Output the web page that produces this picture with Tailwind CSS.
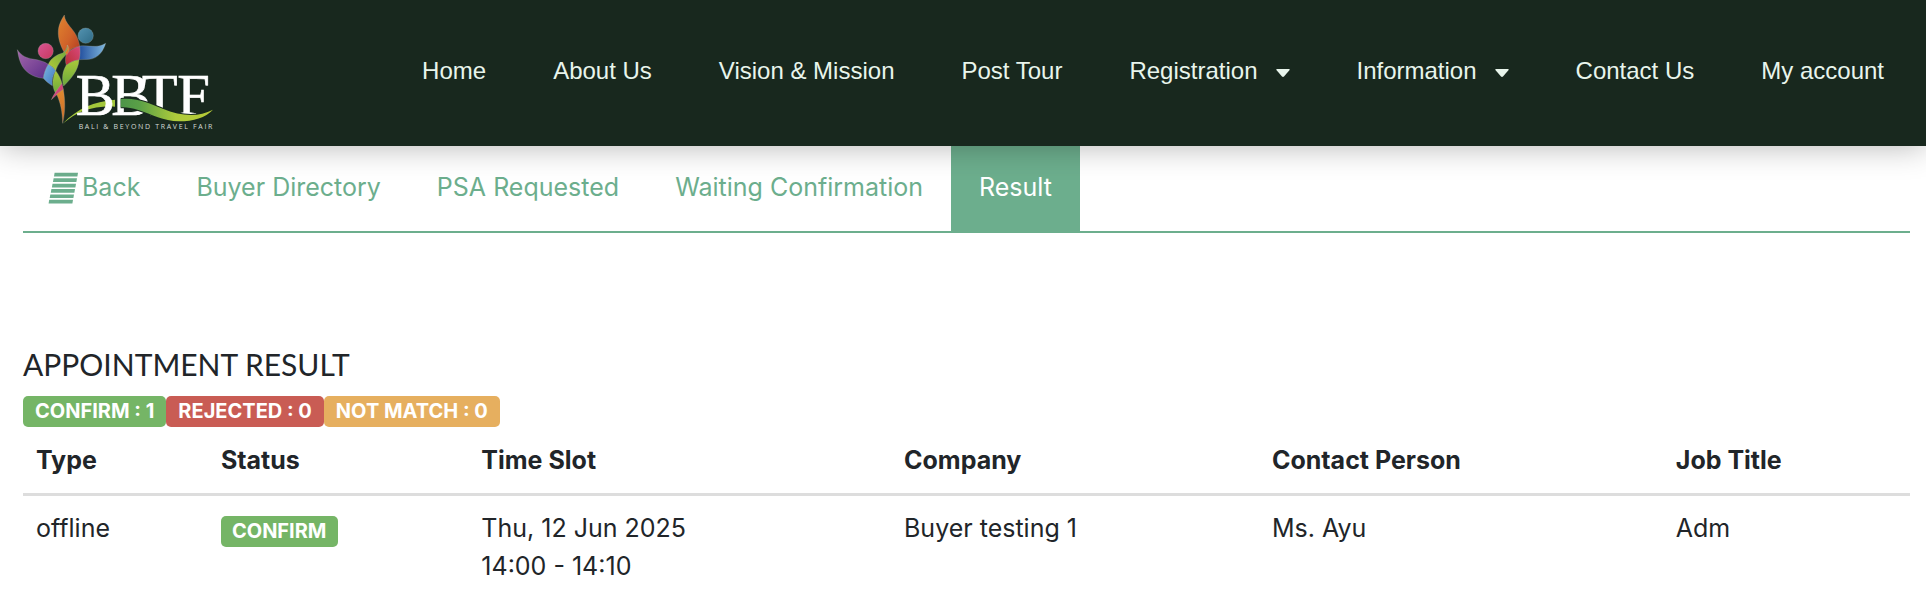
<!DOCTYPE html>
<html lang="en">
<head>
<meta charset="utf-8">
<meta name="viewport" content="width=device-width, initial-scale=1">
<title>BBTF - Appointment Result</title>
<script src="https://cdn.jsdelivr.net/npm/@tailwindcss/browser@4"></script>
</head>
<body class="min-h-screen bg-white font-['Inter',sans-serif] text-[25px] text-[#212529]">
<header class="relative flex items-center justify-between bg-[#18281e] pr-[42px] shadow-[0_0_30px_rgba(0,0,0,0.3)]">
  <a href="#" aria-label="BBTF home" class="shrink-0">
    <svg class="h-[146px] w-60" viewBox="0 0 720 438" role="img" aria-label="BBTF Bali &amp; Beyond Travel Fair">
      <defs>
        <linearGradient id="orange" x1="0" y1="0" x2="1" y2="1"><stop offset="0" stop-color="#e0842e"/><stop offset=".55" stop-color="#d0632a"/><stop offset="1" stop-color="#b03a20"/></linearGradient>
        <linearGradient id="purple" x1="0" y1="0" x2="1" y2="1"><stop offset="0" stop-color="#a468ac"/><stop offset="1" stop-color="#5c2d88"/></linearGradient>
        <linearGradient id="blue" x1="0" y1="0" x2="1" y2="0"><stop offset="0" stop-color="#24509f"/><stop offset="1" stop-color="#7fb8dd"/></linearGradient>
        <linearGradient id="sky" x1="0" y1="0" x2="1" y2="1"><stop offset="0" stop-color="#7bb6e0"/><stop offset="1" stop-color="#3f76bd"/></linearGradient>
        <linearGradient id="lime" x1="0" y1="1" x2="1" y2="0"><stop offset="0" stop-color="#b4cc38"/><stop offset="1" stop-color="#65a33c"/></linearGradient>
        <linearGradient id="leg" x1="0" y1="0" x2="0" y2="1"><stop offset="0" stop-color="#a9c93a"/><stop offset="1" stop-color="#69a83c"/></linearGradient>
        <linearGradient id="red" x1="0" y1="1" x2="1" y2="0"><stop offset="0" stop-color="#b92f34"/><stop offset="1" stop-color="#d8487c"/></linearGradient>
        <linearGradient id="pink" x1="0" y1="0" x2="1" y2="1"><stop offset="0" stop-color="#d95694"/><stop offset="1" stop-color="#c8385e"/></linearGradient>
        <linearGradient id="teal" x1="0" y1="0" x2="1" y2="1"><stop offset="0" stop-color="#5393b1"/><stop offset="1" stop-color="#2f6b86"/></linearGradient>
        <linearGradient id="stem" x1="0" y1="0" x2="0" y2="1"><stop offset="0" stop-color="#e08a30"/><stop offset="1" stop-color="#cb6b28"/></linearGradient>
        <linearGradient id="wave" x1="0" y1="0" x2="1" y2="0"><stop offset="0" stop-color="#4d9448"/><stop offset=".2" stop-color="#5aa047"/><stop offset=".6" stop-color="#aecb3b"/><stop offset="1" stop-color="#b5c936"/></linearGradient>
      </defs>
      <g stroke="#a9b0a8" stroke-opacity=".55" stroke-width="1.5">
        <circle cx="137" cy="153" r="23" fill="url(#pink)"/>
        <circle cx="257" cy="107" r="23" fill="url(#teal)"/>
        <path fill="url(#orange)" d="M193 45C186 57 177 70 175 91C173 119 184 143 196 163C209 149 224 142 239 139C235 110 222 94 210 80C199 67 194 58 193 45Z"/>
        <path fill="url(#blue)" d="M239 138C265 134 289 147 317 130C311 151 296 175 268 178C257 179 247 178 238 179Z"/>
        <path fill="url(#purple)" d="M52 149C65 168 79 174 98 177C117 180 133 184 145 193C137 207 132 222 130 235C97 232 72 214 62 189C55 172 54 158 52 149Z"/>
        <path fill="url(#sky)" d="M145 193C155 197 162 204 167 212C158 225 155 240 157 257C146 251 137 243 130 235C132 220 137 206 145 193Z"/>
        <path fill="url(#lime)" d="M145 193C153 174 170 164 188 159C196 154 201 145 202 135C206 146 207 152 202 160C188 174 173 193 167 212C161 203 154 197 145 193Z"/>
        <path fill="url(#leg)" d="M167 212C176 223 183 238 186 250L170 284C158 269 153 241 167 212Z"/>
        <path fill="url(#red)" d="M199 161C211 150 225 142 239 139C241 154 241 167 237 180C222 181 210 187 199 196C195 184 196 173 199 161Z"/>
        <path fill="url(#leg)" d="M237 180C235 212 213 236 191 258C184 235 188 212 199 196C210 187 222 181 237 180Z"/>
        <path fill="url(#pink)" d="M186 250L190 268C178 277 169 286 154 299C163 280 171 270 186 250Z"/>
        <path fill="url(#stem)" d="M170 283C177 277 184 272 190 268C196 304 196 336 188 370C187 335 182 310 170 283Z"/>
        <path fill="#df7b2d" d="M195 158C201 151 204 144 202 135C210 147 208 153 201 164Z"/>
      </g>
      <path fill="#a4c73b" d="M188 371C210 349 234 331 262 319C284 309 312 302 345 299V320C300 318 259 326 230 342C213 351 201 361 188 371Z"/>
      <text class="font-['Liberation_Serif',serif] text-[176px]" x="227 334 425 532" y="345" fill="#fff" stroke="#fff" stroke-width="2">BBTF</text>
      <path fill="#18281e" d="M362 294C412 289 449 307 489 323C543 345 593 350 639 325L639 333C616 356 581 367 537 367C490 366 455 346 414 333C393 326 378 324 362 325Z"/>
      <path fill="url(#wave)" d="M362 297C412 292 448 310 488 326C543 348 593 353 639 329C616 353 581 364 537 364C490 363 456 343 415 330C394 323 378 321 362 322Z"/>
      <text class="font-['Open_Sans',sans-serif] text-[21px] tracking-[5px]" x="236" y="387" fill="#d5dbd6">BALI &amp; BEYOND TRAVEL FAIR</text>
    </svg>
  </a>
  <nav aria-label="Main" class="flex items-center gap-[67px] whitespace-nowrap pb-1 font-['Liberation_Sans',Arial,sans-serif] text-2xl text-[#e8f5ec]">
    <a href="#">Home</a>
    <a href="#">About Us</a>
    <a href="#">Vision &amp; Mission</a>
    <a href="#">Post Tour</a>
    <button type="button" class="flex items-center gap-[18px]">Registration
      <svg class="mt-1 h-2 w-[14px]" viewBox="0 0 14 8" fill="currentColor" aria-hidden="true"><path d="M1 0h12q1 0 .6 1L8 7.500q-1 .8-2 0L.4 1Q0 0 1 0z"/></svg></button>
    <button type="button" class="flex items-center gap-[18px]">Information
      <svg class="mt-1 h-2 w-[14px]" viewBox="0 0 14 8" fill="currentColor" aria-hidden="true"><path d="M1 0h12q1 0 .6 1L8 7.500q-1 .8-2 0L.4 1Q0 0 1 0z"/></svg></button>
    <a href="#">Contact Us</a>
    <a href="#">My account</a>
  </nav>
</header>
<main class="pr-4 pl-[23px]">
  <nav aria-label="Appointments" class="flex h-[87px] border-b-2 border-[#6cae8d] whitespace-nowrap text-[#6cae8d]">
    <a href="#" class="flex items-center gap-1 pr-7 pb-0.5 pl-[25px]">
      <svg class="h-8 w-[30px]" viewBox="0 0 30 32" fill="currentColor" aria-hidden="true"><path d="M6.600 .8h23.400l-.6 3.700H6zM5.600 6.200H29l-.6 3.700H5zM4.500 11.700H28l-.6 3.700H3.900zM3.400 17H27l-.6 3.700H2.800zM2.300 22.400H26l-.6 3.600H1.700zM1.200 27.800H25l-.6 3.600H.6z"/></svg>
      Back</a>
    <a href="#" class="flex items-center px-7 pb-0.5">Buyer Directory</a>
    <a href="#" class="flex items-center px-7 pb-0.5">PSA Requested</a>
    <a href="#" class="flex items-center px-7 pb-0.5">Waiting Confirmation</a>
    <a href="#" aria-current="page" class="flex items-center bg-[#6cae8d] px-7 pb-0.5 text-white">Result</a>
  </nav>
  <h1 class="mt-[113px] font-['Lato',sans-serif] text-[30px] leading-9">APPOINTMENT RESULT</h1>
  <div class="mt-[14px] flex text-xl font-bold text-white">
    <span class="rounded-[5px] bg-[#75b566] px-3 leading-[31px]">CONFIRM : 1</span>
    <span class="rounded-[5px] bg-[#c95c54] px-3 leading-[31px]">REJECTED : 0</span>
    <span class="rounded-[5px] bg-[#e6af5f] px-3 leading-[31px]">NOT MATCH : 0</span>
  </div>
  <table class="w-full table-fixed text-left leading-[38px]">
    <colgroup><col class="w-[9.800%]"><col class="w-[13.800%]"><col class="w-[22.400%]"><col class="w-[19.500%]"><col class="w-[21.400%]"><col></colgroup>
    <thead class="border-b-3 border-[#ddd]">
      <tr>
        <th scope="col" class="px-[13px] py-[14px]">Type</th>
        <th scope="col" class="px-[13px] py-[14px]">Status</th>
        <th scope="col" class="px-[13px] py-[14px]">Time Slot</th>
        <th scope="col" class="px-[13px] py-[14px]">Company</th>
        <th scope="col" class="px-[13px] py-[14px]">Contact Person</th>
        <th scope="col" class="px-[13px] py-[14px]">Job Title</th>
      </tr>
    </thead>
    <tbody>
      <tr class="align-top">
        <td class="px-[13px] py-[13px]">offline</td>
        <td class="px-[13px] py-5"><span class="block w-fit rounded-[5px] bg-[#75b566] px-[11px] text-xl leading-[31px] font-bold text-white">CONFIRM</span></td>
        <td class="px-[13px] py-[13px]">Thu, 12 Jun 2025<br>14:00 - 14:10</td>
        <td class="px-[13px] py-[13px]">Buyer testing 1</td>
        <td class="px-[13px] py-[13px]">Ms. Ayu</td>
        <td class="px-[13px] py-[13px]">Adm</td>
      </tr>
    </tbody>
  </table>
</main>
</body>
</html>
